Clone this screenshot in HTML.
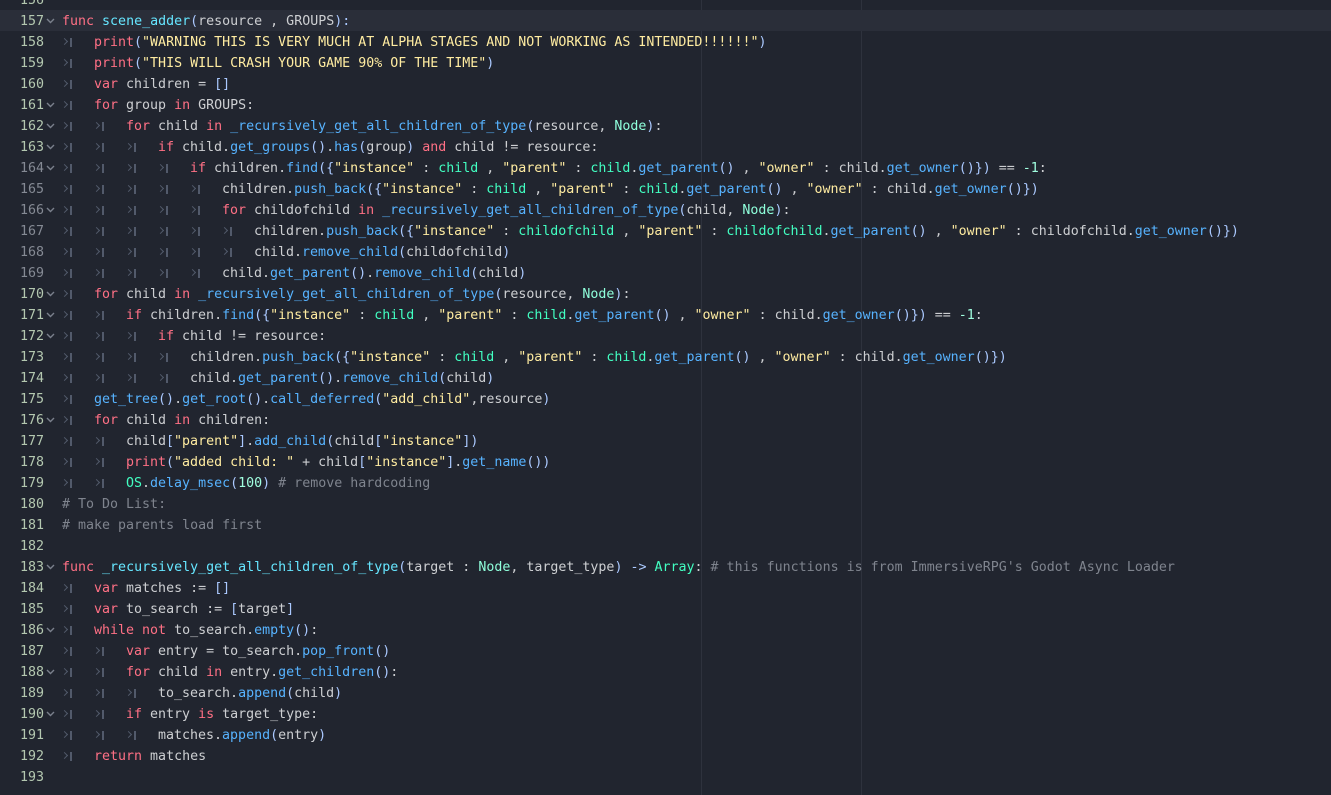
<!DOCTYPE html>
<html><head><meta charset="utf-8"><style>
body{margin:0;width:1331px;height:795px;background:#21252f;overflow:hidden;position:relative;font-family:"DejaVu Sans Mono","Liberation Mono",monospace;font-size:13.3px;color:#cdcfd2}
.r{position:absolute;left:0;width:1331px;height:21px;line-height:21px;white-space:pre}
.cur{background:#2a2e39}
.ln{position:absolute;left:0;top:1px;width:44px;text-align:right;color:#b4c8b0}
.ln.g{color:#858a94}
.fd{position:absolute;left:46px;top:8px;width:9px;height:6px}
.fd svg{display:block}
.code{position:absolute;left:62px;top:1px}
.t{display:inline-block;width:32px;height:21px;position:relative;vertical-align:top}
.t::before{content:"";position:absolute;left:0px;top:7px;width:4px;height:4px;border-top:1.5px solid #525a6b;border-right:1.5px solid #525a6b;transform:rotate(45deg)}
.t::after{content:"";position:absolute;left:8px;top:6px;width:1.5px;height:9px;background:#525a6b}
.k{color:#ff7085}.f{color:#66e6ff}.m{color:#57b3ff}.s{color:#ffeca1}.n{color:#a1ffe0}.g{color:#42ffc2}.ty{color:#8fffdb}.c{color:#7f848e}.p{color:#abc9ff}
.vl{position:absolute;top:0;width:1px;height:795px;background:#2e323d}
</style></head><body>
<svg width="0" height="0" style="position:absolute"><defs><symbol id="ch" viewBox="0 0 9 6"><path d="M1 1 L4.5 4.5 L8 1" fill="none" stroke="#7a808c" stroke-width="1.4"/></symbol></defs></svg>
<div class="vl" style="left:701px"></div><div class="vl" style="left:861px"></div>
<div class="r" style="top:-11px"><span class="ln">156</span></div>
<div class="r cur" style="top:10px"><span class="ln">157</span><span class="fd"><svg width="9" height="6"><use href="#ch"/></svg></span><span class="code"><span class="k">func</span> <span class="f">scene_adder</span><span class="p">(</span>resource , GROUPS<span class="p">):</span></span></div>
<div class="r" style="top:31px"><span class="ln">158</span><span class="code"><span class="t"></span><span class="k">print</span><span class="p">(</span><span class="s">"WARNING THIS IS VERY MUCH AT ALPHA STAGES AND NOT WORKING AS INTENDED!!!!!!"</span><span class="p">)</span></span></div>
<div class="r" style="top:52px"><span class="ln">159</span><span class="code"><span class="t"></span><span class="k">print</span><span class="p">(</span><span class="s">"THIS WILL CRASH YOUR GAME 90% OF THE TIME"</span><span class="p">)</span></span></div>
<div class="r" style="top:73px"><span class="ln">160</span><span class="code"><span class="t"></span><span class="k">var</span> children = <span class="p">[]</span></span></div>
<div class="r" style="top:94px"><span class="ln">161</span><span class="fd"><svg width="9" height="6"><use href="#ch"/></svg></span><span class="code"><span class="t"></span><span class="k">for</span> group <span class="k">in</span> GROUPS:</span></div>
<div class="r" style="top:115px"><span class="ln">162</span><span class="fd"><svg width="9" height="6"><use href="#ch"/></svg></span><span class="code"><span class="t"></span><span class="t"></span><span class="k">for</span> child <span class="k">in</span> <span class="m">_recursively_get_all_children_of_type</span><span class="p">(</span>resource, <span class="ty">Node</span><span class="p">)</span>:</span></div>
<div class="r" style="top:136px"><span class="ln">163</span><span class="fd"><svg width="9" height="6"><use href="#ch"/></svg></span><span class="code"><span class="t"></span><span class="t"></span><span class="t"></span><span class="k">if</span> child.<span class="m">get_groups</span><span class="p">()</span>.<span class="m">has</span><span class="p">(</span>group<span class="p">)</span> <span class="k">and</span> child != resource:</span></div>
<div class="r" style="top:157px"><span class="ln g">164</span><span class="fd"><svg width="9" height="6"><use href="#ch"/></svg></span><span class="code"><span class="t"></span><span class="t"></span><span class="t"></span><span class="t"></span><span class="k">if</span> children.<span class="m">find</span><span class="p">({</span><span class="s">"instance"</span> : <span class="g">child</span> , <span class="s">"parent"</span> : <span class="g">child</span>.<span class="m">get_parent</span><span class="p">()</span> , <span class="s">"owner"</span> : child.<span class="m">get_owner</span><span class="p">()})</span> == <span class="n">-1</span>:</span></div>
<div class="r" style="top:178px"><span class="ln g">165</span><span class="code"><span class="t"></span><span class="t"></span><span class="t"></span><span class="t"></span><span class="t"></span>children.<span class="m">push_back</span><span class="p">({</span><span class="s">"instance"</span> : <span class="g">child</span> , <span class="s">"parent"</span> : <span class="g">child</span>.<span class="m">get_parent</span><span class="p">()</span> , <span class="s">"owner"</span> : child.<span class="m">get_owner</span><span class="p">()})</span></span></div>
<div class="r" style="top:199px"><span class="ln g">166</span><span class="fd"><svg width="9" height="6"><use href="#ch"/></svg></span><span class="code"><span class="t"></span><span class="t"></span><span class="t"></span><span class="t"></span><span class="t"></span><span class="k">for</span> childofchild <span class="k">in</span> <span class="m">_recursively_get_all_children_of_type</span><span class="p">(</span>child, <span class="ty">Node</span><span class="p">)</span>:</span></div>
<div class="r" style="top:220px"><span class="ln g">167</span><span class="code"><span class="t"></span><span class="t"></span><span class="t"></span><span class="t"></span><span class="t"></span><span class="t"></span>children.<span class="m">push_back</span><span class="p">({</span><span class="s">"instance"</span> : <span class="g">childofchild</span> , <span class="s">"parent"</span> : <span class="g">childofchild</span>.<span class="m">get_parent</span><span class="p">()</span> , <span class="s">"owner"</span> : childofchild.<span class="m">get_owner</span><span class="p">()})</span></span></div>
<div class="r" style="top:241px"><span class="ln g">168</span><span class="code"><span class="t"></span><span class="t"></span><span class="t"></span><span class="t"></span><span class="t"></span><span class="t"></span>child.<span class="m">remove_child</span><span class="p">(</span>childofchild<span class="p">)</span></span></div>
<div class="r" style="top:262px"><span class="ln g">169</span><span class="code"><span class="t"></span><span class="t"></span><span class="t"></span><span class="t"></span><span class="t"></span>child.<span class="m">get_parent</span><span class="p">()</span>.<span class="m">remove_child</span><span class="p">(</span>child<span class="p">)</span></span></div>
<div class="r" style="top:283px"><span class="ln">170</span><span class="fd"><svg width="9" height="6"><use href="#ch"/></svg></span><span class="code"><span class="t"></span><span class="k">for</span> child <span class="k">in</span> <span class="m">_recursively_get_all_children_of_type</span><span class="p">(</span>resource, <span class="ty">Node</span><span class="p">)</span>:</span></div>
<div class="r" style="top:304px"><span class="ln">171</span><span class="fd"><svg width="9" height="6"><use href="#ch"/></svg></span><span class="code"><span class="t"></span><span class="t"></span><span class="k">if</span> children.<span class="m">find</span><span class="p">({</span><span class="s">"instance"</span> : <span class="g">child</span> , <span class="s">"parent"</span> : <span class="g">child</span>.<span class="m">get_parent</span><span class="p">()</span> , <span class="s">"owner"</span> : child.<span class="m">get_owner</span><span class="p">()})</span> == <span class="n">-1</span>:</span></div>
<div class="r" style="top:325px"><span class="ln">172</span><span class="fd"><svg width="9" height="6"><use href="#ch"/></svg></span><span class="code"><span class="t"></span><span class="t"></span><span class="t"></span><span class="k">if</span> child != resource:</span></div>
<div class="r" style="top:346px"><span class="ln">173</span><span class="code"><span class="t"></span><span class="t"></span><span class="t"></span><span class="t"></span>children.<span class="m">push_back</span><span class="p">({</span><span class="s">"instance"</span> : <span class="g">child</span> , <span class="s">"parent"</span> : <span class="g">child</span>.<span class="m">get_parent</span><span class="p">()</span> , <span class="s">"owner"</span> : child.<span class="m">get_owner</span><span class="p">()})</span></span></div>
<div class="r" style="top:367px"><span class="ln">174</span><span class="code"><span class="t"></span><span class="t"></span><span class="t"></span><span class="t"></span>child.<span class="m">get_parent</span><span class="p">()</span>.<span class="m">remove_child</span><span class="p">(</span>child<span class="p">)</span></span></div>
<div class="r" style="top:388px"><span class="ln">175</span><span class="code"><span class="t"></span><span class="m">get_tree</span><span class="p">()</span>.<span class="m">get_root</span><span class="p">()</span>.<span class="m">call_deferred</span><span class="p">(</span><span class="s">"add_child"</span>,resource<span class="p">)</span></span></div>
<div class="r" style="top:409px"><span class="ln">176</span><span class="fd"><svg width="9" height="6"><use href="#ch"/></svg></span><span class="code"><span class="t"></span><span class="k">for</span> child <span class="k">in</span> children:</span></div>
<div class="r" style="top:430px"><span class="ln">177</span><span class="code"><span class="t"></span><span class="t"></span>child<span class="p">[</span><span class="s">"parent"</span><span class="p">]</span>.<span class="m">add_child</span><span class="p">(</span>child<span class="p">[</span><span class="s">"instance"</span><span class="p">])</span></span></div>
<div class="r" style="top:451px"><span class="ln">178</span><span class="code"><span class="t"></span><span class="t"></span><span class="k">print</span><span class="p">(</span><span class="s">"added child: "</span> + child<span class="p">[</span><span class="s">"instance"</span><span class="p">]</span>.<span class="m">get_name</span><span class="p">())</span></span></div>
<div class="r" style="top:472px"><span class="ln">179</span><span class="code"><span class="t"></span><span class="t"></span><span class="g">OS</span>.<span class="m">delay_msec</span><span class="p">(</span><span class="n">100</span><span class="p">)</span> <span class="c"># remove hardcoding</span></span></div>
<div class="r" style="top:493px"><span class="ln">180</span><span class="code"><span class="c"># To Do List:</span></span></div>
<div class="r" style="top:514px"><span class="ln">181</span><span class="code"><span class="c"># make parents load first</span></span></div>
<div class="r" style="top:535px"><span class="ln">182</span></div>
<div class="r" style="top:556px"><span class="ln">183</span><span class="fd"><svg width="9" height="6"><use href="#ch"/></svg></span><span class="code"><span class="k">func</span> <span class="f">_recursively_get_all_children_of_type</span><span class="p">(</span>target : <span class="ty">Node</span>, target_type<span class="p">)</span> <span class="p">-&gt;</span> <span class="g">Array</span>: <span class="c"># this functions is from ImmersiveRPG's Godot Async Loader</span></span></div>
<div class="r" style="top:577px"><span class="ln">184</span><span class="code"><span class="t"></span><span class="k">var</span> matches := <span class="p">[]</span></span></div>
<div class="r" style="top:598px"><span class="ln">185</span><span class="code"><span class="t"></span><span class="k">var</span> to_search := <span class="p">[</span>target<span class="p">]</span></span></div>
<div class="r" style="top:619px"><span class="ln">186</span><span class="fd"><svg width="9" height="6"><use href="#ch"/></svg></span><span class="code"><span class="t"></span><span class="k">while</span> <span class="k">not</span> to_search.<span class="m">empty</span><span class="p">()</span>:</span></div>
<div class="r" style="top:640px"><span class="ln">187</span><span class="code"><span class="t"></span><span class="t"></span><span class="k">var</span> entry = to_search.<span class="m">pop_front</span><span class="p">()</span></span></div>
<div class="r" style="top:661px"><span class="ln">188</span><span class="fd"><svg width="9" height="6"><use href="#ch"/></svg></span><span class="code"><span class="t"></span><span class="t"></span><span class="k">for</span> child <span class="k">in</span> entry.<span class="m">get_children</span><span class="p">()</span>:</span></div>
<div class="r" style="top:682px"><span class="ln">189</span><span class="code"><span class="t"></span><span class="t"></span><span class="t"></span>to_search.<span class="m">append</span><span class="p">(</span>child<span class="p">)</span></span></div>
<div class="r" style="top:703px"><span class="ln">190</span><span class="fd"><svg width="9" height="6"><use href="#ch"/></svg></span><span class="code"><span class="t"></span><span class="t"></span><span class="k">if</span> entry <span class="k">is</span> target_type:</span></div>
<div class="r" style="top:724px"><span class="ln">191</span><span class="code"><span class="t"></span><span class="t"></span><span class="t"></span>matches.<span class="m">append</span><span class="p">(</span>entry<span class="p">)</span></span></div>
<div class="r" style="top:745px"><span class="ln">192</span><span class="code"><span class="t"></span><span class="k">return</span> matches</span></div>
<div class="r" style="top:766px"><span class="ln">193</span></div>
</body></html>
